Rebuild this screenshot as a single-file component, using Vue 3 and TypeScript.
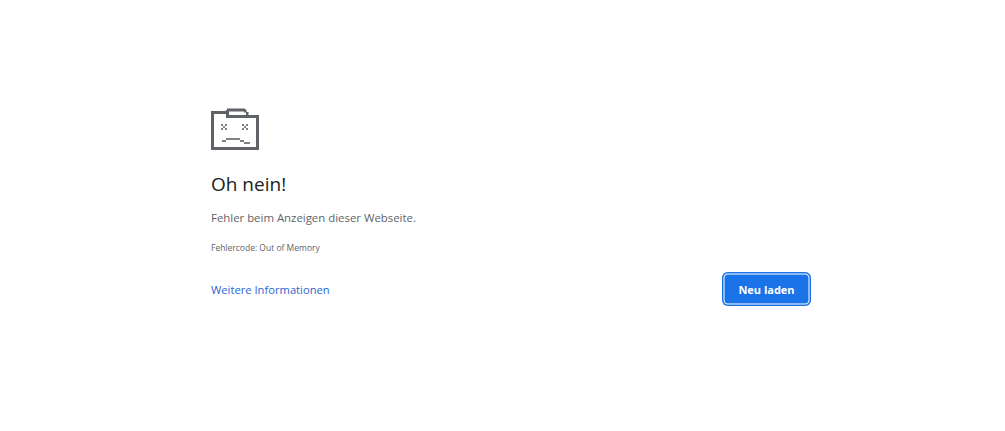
<script setup lang="ts">
const title: string = 'Oh nein!'
</script>

<template>
  <main class="page">
    <div class="box">
      <svg class="icon" width="48" height="42" viewBox="0 0 48 42" aria-hidden="true">
        <g fill="#5f6368">
          <rect x="0" y="3" width="3" height="39" />
          <rect x="0" y="3" width="16" height="3" />
          <rect x="16" y="0.5" width="18" height="3" />
          <rect x="15" y="2" width="3" height="8" />
          <rect x="16" y="7" width="32" height="3" />
          <rect x="33" y="1.5" width="2.5" height="3" />
          <rect x="35" y="4" width="2.5" height="4" />
          <rect x="45" y="7" width="3" height="35" />
          <rect x="0" y="39" width="48" height="3" />
        </g>
        <g fill="#5f6368" opacity="0.8">
          <rect x="10" y="16" width="2" height="2" />
          <rect x="14" y="16" width="2" height="2" />
          <rect x="12" y="18" width="2" height="2" />
          <rect x="10" y="20" width="2" height="2" />
          <rect x="14" y="20" width="2" height="2" />
          <rect x="31" y="16" width="2" height="2" />
          <rect x="35" y="16" width="2" height="2" />
          <rect x="33" y="18" width="2" height="2" />
          <rect x="31" y="20" width="2" height="2" />
          <rect x="35" y="20" width="2" height="2" />
          <rect x="11" y="32" width="4" height="2" />
          <rect x="15" y="30" width="14" height="2" />
          <rect x="29" y="32" width="4" height="2" />
          <rect x="33" y="34" width="6" height="2" />
        </g>
      </svg>
      <h1 class="title">{{ title }}</h1>
      <p class="message">Fehler beim Anzeigen dieser Webseite.</p>
      <p class="code">Fehlercode: Out of Memory</p>
      <div class="actions">
        <a class="link" href="#">Weitere Informationen</a>
        <button class="reload" type="button">Neu laden</button>
      </div>
    </div>
  </main>
</template>

<style>
html, body { margin: 0; background: #fff; }
</style>

<style scoped>
.page {
  width: 1005px;
  height: 431px;
  overflow: hidden;
  background: #fff;
  font-family: "Open Sans", "Noto Sans", sans-serif;
}
.box {
  width: 600px;
  margin-left: 211px;
  padding-top: 108px;
}
.icon { display: block; }
.title {
  margin: 20px 0 0;
  font-size: 19px;
  line-height: 28px;
  font-weight: 400;
  color: #202124;
}
.message {
  margin: 11px 0 0;
  font-size: 11.4px;
  line-height: 18px;
  color: #5f6368;
}
.code {
  margin: 14px 0 0;
  font-size: 8.5px;
  line-height: 14px;
  color: #5f6368;
}
.actions {
  margin-top: 17px;
  display: flex;
  align-items: center;
  justify-content: space-between;
}
.link {
  font-size: 11.2px;
  color: #2b65d1;
  text-decoration: none;
}
.reload {
  width: 89px;
  height: 34px;
  padding: 0;
  border: none;
  border-radius: 6px;
  box-shadow: inset 0 0 0 1.5px #1a73e8, inset 0 0 0 2.5px #fff;
  background: #1a73e8;
  color: #fff;
  font-family: inherit;
  font-size: 11px;
  font-weight: 700;
}
</style>
